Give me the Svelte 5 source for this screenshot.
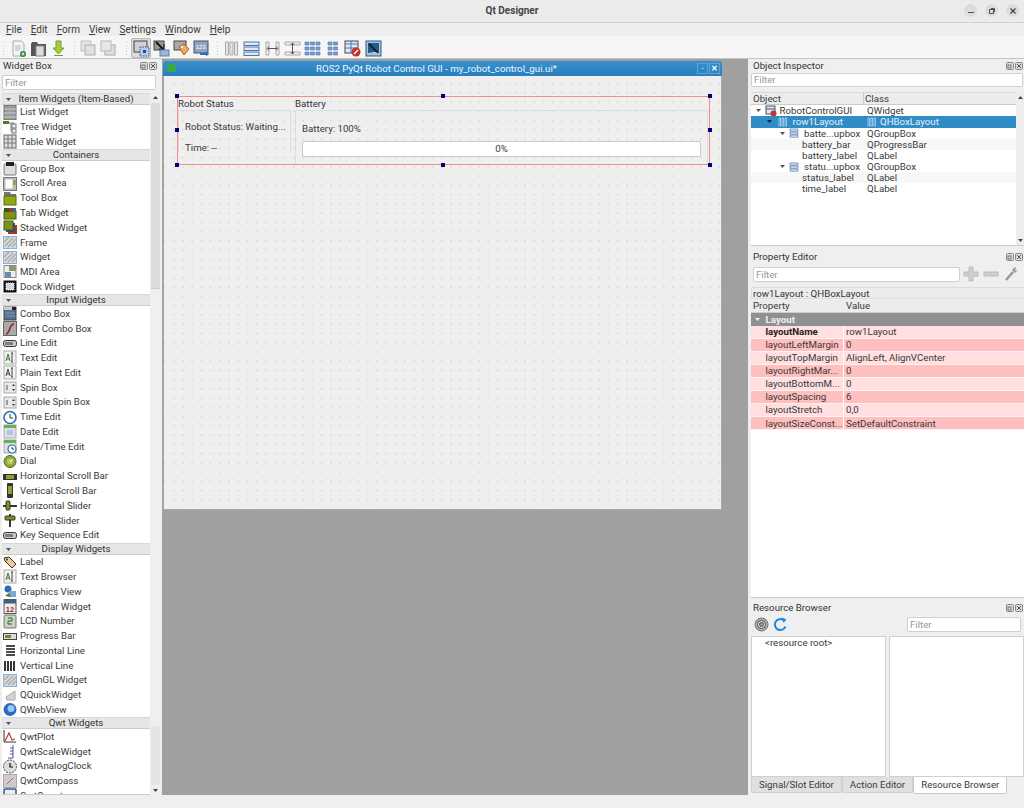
<script>
const ic = {
  list:`<rect x="1" y="0" width="12" height="15" fill="#9a9a9a" stroke="#666"/><path d="M1 4h12M1 8h12M1 12h12" stroke="#ccc"/>`,
  tree:`<rect x="0" y="2" width="6" height="3" fill="#4c7c2c"/><path d="M6 4h5v4h2M8 4v8h3" stroke="#777" fill="none"/><rect x="9" y="5" width="4" height="4" fill="#eee" stroke="#777"/><rect x="9" y="10" width="4" height="4" fill="#eee" stroke="#777"/>`,
  table:`<rect x="1" y="1" width="12" height="13" fill="#ddd" stroke="#666"/><path d="M1 5h12M1 9h12M5 1v13M9 1v13" stroke="#777"/>`,
  group:`<rect x="1" y="3" width="12" height="11" rx="1" fill="#ddd" stroke="#777"/><rect x="3" y="1" width="8" height="4" fill="#222"/>`,
  scroll:`<rect x="0.5" y="1.500" width="13" height="13" fill="#bbb" stroke="#777"/><rect x="2.500" y="3.500" width="7" height="9" fill="#fff"/><rect x="10.500" y="4" width="2" height="5" fill="#8a9a1a"/>`,
  tool:`<path d="M1 1h6l1 2h5v3H1z" fill="#777"/><rect x="1" y="5" width="12" height="9" fill="#8fa81c" stroke="#5a6a10"/>`,
  tab:`<rect x="1" y="6" width="12" height="8" fill="#7d9418" stroke="#4a5a10"/><rect x="1" y="3" width="5" height="4" fill="#2b5a22"/><rect x="6" y="3" width="4" height="4" fill="#b0302a"/><rect x="10" y="3" width="3" height="4" fill="#2b6aa0"/>`,
  stack:`<rect x="5" y="5" width="9" height="9" fill="#a5391e"/><rect x="3" y="3" width="9" height="9" fill="#2b4a90"/><rect x="1" y="1" width="9" height="9" fill="#7d9418" stroke="#4a5a10"/>`,
  frame:`<rect x="0.500" y="1.500" width="13" height="12" fill="#d8d8d8" stroke="#8ab0dc"/><path d="M2 11L10 3M5 12l8-8M1 7l5-5M9 12l4-4" stroke="#aaa" stroke-width="1.300"/>`,
  mdi:`<rect x="1" y="1.500" width="12" height="12" fill="#eee" stroke="#888"/><rect x="6" y="2" width="7" height="5" fill="#8a9a6a"/><rect x="2" y="8" width="6" height="5" fill="#6c8ab0"/>`,
  dock:`<rect x="0.500" y="1.500" width="13" height="12" fill="#111"/><rect x="3" y="4" width="8" height="7" fill="#cfd8e8" stroke="#fff" stroke-dasharray="1 1"/>`,
  combo:`<rect x="1" y="1" width="12" height="13" fill="#55708f" stroke="#444"/><rect x="1" y="1" width="12" height="3" fill="#ccc"/><path d="M9 1h4v3H9z" fill="#222"/><path d="M2 7h10M2 10h10" stroke="#8099b8"/>`,
  font:`<rect x="0.500" y="0.500" width="13" height="14" fill="#aaa" stroke="#666"/><path d="M3 13C7 13 6 3 11 3" stroke="#9a1c1c" stroke-width="1.500" fill="none"/>`,
  line:`<rect x="0.500" y="4.500" width="13" height="6" rx="2" fill="#ccc" stroke="#333"/><path d="M3 6v3M5 6v3M7 6v3M9 6v3" stroke="#333"/>`,
  text:`<rect x="1" y="1" width="12" height="13" fill="#f2f2f2" stroke="#aaa"/><path d="M3 11l2-7 2 7M3.700 9h3" stroke="#3c7a2c" fill="none"/><path d="M9 3v9M8 3h2M8 12h2" stroke="#444"/>`,
  plain:`<rect x="1" y="1" width="12" height="13" fill="#f2f2f2" stroke="#aaa"/><path d="M3 11l2-7 2 7M3.700 9h3" stroke="#444" fill="none"/><path d="M9 3v9M8 3h2M8 12h2" stroke="#444"/>`,
  spin:`<rect x="1" y="2" width="12" height="11" fill="#e8e8e8" stroke="#aaa"/><path d="M4 5v5" stroke="#555"/><path d="M9 6l1.500-2L12 6zM9 9l1.500 2L12 9z" fill="#333"/>`,
  time:`<circle cx="7" cy="7.500" r="6" fill="#fff" stroke="#2a6cb0" stroke-width="1.600"/><path d="M7 4v4h3" stroke="#333" fill="none"/>`,
  date:`<rect x="1" y="1" width="12" height="13" fill="#dde" stroke="#aaa"/><rect x="1" y="1" width="12" height="3" fill="#6ab04c"/><rect x="4" y="6" width="6" height="5" fill="#b8c4d8"/>`,
  datetime:`<rect x="1" y="1" width="12" height="13" fill="#dde" stroke="#aaa"/><rect x="1" y="1" width="12" height="3" fill="#6ab04c"/><circle cx="9" cy="10" r="4" fill="#fff" stroke="#2a6cb0" stroke-width="1.200"/><path d="M9 8v2h2" stroke="#333" fill="none"/>`,
  dial:`<circle cx="7" cy="7.500" r="6" fill="#8fa83c" stroke="#556a18"/><circle cx="7" cy="7.500" r="3" fill="#b6c868"/><path d="M7 8l3-3" stroke="#fff"/>`,
  hscroll:`<rect x="0" y="5" width="14" height="6" fill="#333"/><rect x="3" y="6" width="8" height="4" fill="#8fa02c"/>`,
  vscroll:`<rect x="4" y="0" width="6" height="15" rx="1" fill="#333"/><rect x="5" y="3" width="4" height="8" fill="#8fa02c"/>`,
  hslider:`<path d="M0 8h14" stroke="#333" stroke-width="2"/><rect x="3" y="3" width="4" height="9" rx="1" fill="#7d9418" stroke="#333"/>`,
  vslider:`<path d="M7 1v13" stroke="#333" stroke-width="2"/><rect x="2" y="3" width="10" height="4" rx="1" fill="#7d9418" stroke="#333"/>`,
  label:`<path d="M1 3l5-1 7 7-4 4-7-7z" fill="#f2c894" stroke="#333"/><circle cx="4" cy="4.500" r="1" fill="#333"/>`,
  gview:`<circle cx="5" cy="5" r="3.500" fill="#2a6cb0"/><rect x="6" y="7" width="7" height="6" fill="#7ea8d8"/><path d="M2 12l4-3 2 4z" fill="#4a7c2c"/>`,
  cal:`<rect x="1" y="0.500" width="12" height="14" fill="#eee" stroke="#555"/><rect x="1" y="0.500" width="12" height="4" fill="#45607f"/><text x="7" y="12.500" text-anchor="middle" font-size="7.500" font-weight="700" fill="#b02020" font-family="Liberation Sans">12</text>`,
  lcd:`<rect x="1" y="1" width="12" height="13" rx="1" fill="#c8d4c0" stroke="#777"/><path d="M5 4h4v3H5v3h4" stroke="#2a6a2a" fill="none"/>`,
  prog:`<rect x="0.500" y="5.500" width="13" height="6" fill="#ddd" stroke="#444"/><rect x="2" y="7" width="6" height="3" fill="#77882a"/>`,
  hline:`<path d="M3 3h9M3 6h9M3 9h9M3 12h9" stroke="#111" stroke-width="1.700"/>`,
  vline:`<path d="M2 3v10M5 3v10M8 3v10M11 3v10" stroke="#111" stroke-width="1.700"/>`,
  quick:`<path d="M3 10l9-6v9H4z" fill="#d4d4d4" stroke="#aaa"/>`,
  web:`<circle cx="7" cy="7.500" r="6.500" fill="#2a6cc0"/><circle cx="8" cy="6.500" r="3.500" fill="#9cc4ec"/>`,
  plot:`<path d="M1 1v12h12" stroke="#333" fill="none"/><path d="M2 12L6 4l3 7 3-1" stroke="#c0392b" fill="none" stroke-width="1.200"/>`,
  scale:`<path d="M10 1v13H5M7 4h3M7 7h3M7 10h3" stroke="#4a4ac0" fill="none"/>`,
  clock:`<circle cx="7" cy="7.500" r="6.500" fill="#ddd" stroke="#444" stroke-dasharray="2 1"/><path d="M7 4v4h3" stroke="#111" stroke-width="1.200" fill="none"/>`,
  compass:`<rect x="0.500" y="1.500" width="13" height="13" fill="#ccc" stroke="#aaa"/><path d="M4 11l6-6" stroke="#d05a5a"/>`,
  gauge:`<rect x="1" y="1" width="12" height="13" rx="1" fill="#eee" stroke="#335a8a" stroke-width="1.500"/>`
};

const sections = [
  ['Item Widgets (Item-Based)', [['List Widget','list'],['Tree Widget','tree'],['Table Widget','table']]],
  ['Containers', [['Group Box','group'],['Scroll Area','scroll'],['Tool Box','tool'],['Tab Widget','tab'],['Stacked Widget','stack'],['Frame','frame'],['Widget','frame'],['MDI Area','mdi'],['Dock Widget','dock']]],
  ['Input Widgets', [['Combo Box','combo'],['Font Combo Box','font'],['Line Edit','line'],['Text Edit','text'],['Plain Text Edit','plain'],['Spin Box','spin'],['Double Spin Box','spin'],['Time Edit','time'],['Date Edit','date'],['Date/Time Edit','datetime'],['Dial','dial'],['Horizontal Scroll Bar','hscroll'],['Vertical Scroll Bar','vscroll'],['Horizontal Slider','hslider'],['Vertical Slider','vslider'],['Key Sequence Edit','line']]],
  ['Display Widgets', [['Label','label'],['Text Browser','text'],['Graphics View','gview'],['Calendar Widget','cal'],['LCD Number','lcd'],['Progress Bar','prog'],['Horizontal Line','hline'],['Vertical Line','vline'],['OpenGL Widget','frame'],['QQuickWidget','quick'],['QWebView','web']]],
  ['Qwt Widgets', [['QwtPlot','plot'],['QwtScaleWidget','scale'],['QwtAnalogClock','clock'],['QwtCompass','compass'],['QwtCounter','gauge']]]
];

const tools = [
  [`<path d="M3 1h8l3 3v12H3z" fill="#f4f4f4" stroke="#aaa"/><path d="M5 6h6M5 8h6M5 10h5" stroke="#bbb"/><circle cx="13" cy="14" r="3" fill="#2a8a3a"/><path d="M11.500 14h3M13 12.500v3" stroke="#fff"/>`,
   `<path d="M1 4l1-2h5l1 2h8v12H1z" fill="#555"/><rect x="6" y="6" width="8" height="10" fill="#ddd" stroke="#888"/>`,
   `<path d="M6 1h5v7h3l-5.500 6L3 8h3z" fill="#a6cc44" stroke="#7a9a2c"/><path d="M4 15.500h9" stroke="#7a9a2c"/>`],
  [`<rect x="1" y="1" width="10" height="10" fill="#e4e4e4" stroke="#c2c2c2"/><rect x="5" y="5" width="10" height="10" fill="#e0e0e0" stroke="#b0b0b0"/>`,
   `<rect x="5" y="5" width="10" height="10" fill="#e0e0e0" stroke="#aaa"/><rect x="1" y="1" width="10" height="10" fill="#e8e8e8" stroke="#b8b8b8"/>`],
  [`<rect x="1" y="1" width="13" height="11" fill="#cfcfcf" stroke="#444"/><rect x="7" y="7" width="9" height="9" fill="#b7cbea" stroke="#2a5cb0" stroke-dasharray="1.500 1"/><rect x="10" y="10" width="3" height="3" fill="#2a4c90"/>`,
   `<rect x="1" y="1" width="10" height="9" fill="#999" stroke="#444"/><path d="M3 2l7 7" stroke="#111" stroke-width="1.800"/><path d="M6 9h5V4" stroke="#111" fill="none"/><rect x="7" y="10" width="9" height="6" fill="#9db8dc" stroke="#5a7cac"/>`,
   `<rect x="1" y="1" width="12" height="9" fill="#aaa" stroke="#444"/><path d="M6 7l5-3 5 5-5 6z" fill="#f0a860" stroke="#c05a20"/><circle cx="9" cy="7" r="1" fill="#fff"/>`,
   `<rect x="1" y="1" width="14" height="12" fill="#8ea4bf" stroke="#456"/><text x="2.500" y="9" font-size="6" font-family="Liberation Sans" fill="#fff">123</text><path d="M7 13h6v-2l3 3.500-3 1.500v-1H7z" fill="#2a6cc0"/>`],
  [`<path d="M2.500 2v13h3V2zM7 2v13h3V2zM11.500 2v13h3V2z" fill="#e6e6e6" stroke="#aaa"/>`,
   `<rect x="1" y="2" width="15" height="3.500" fill="#dfe8f3" stroke="#4d7aa8"/><rect x="1" y="7" width="15" height="3.500" fill="#dfe8f3" stroke="#4d7aa8"/><rect x="1" y="12" width="15" height="3.500" fill="#dfe8f3" stroke="#4d7aa8"/>`,
   `<path d="M2 2h3v13H2zM12 2h3v13h-3z" fill="#eee" stroke="#aaa"/><path d="M4 8.500h9M5 6.500l-2 2 2 2M12 6.500l2 2-2 2" stroke="#555" fill="none"/>`,
   `<path d="M1 2h15v3H1zM1 12h15v3H1z" fill="#eee" stroke="#aaa"/><path d="M8.500 3v11M6.500 5l2-2 2 2M6.500 12l2 2 2-2" stroke="#555" fill="none"/>`,
   `<path d="M1 2h4v3H1zM6.500 2h4v3h-4zM12 2h4v3h-4zM1 7h4v3H1zM6.500 7h4v3h-4zM12 7h4v3h-4zM1 12h4v3H1zM6.500 12h4v3h-4zM12 12h4v3h-4z" fill="#7d9fca" stroke="#4a75a8" stroke-width=".6"/>`,
   `<path d="M4 2h4v3H4zM9.500 2h4v3h-4zM4 7h4v3H4zM9.500 7h4v3h-4zM4 12h4v3H4zM9.500 12h4v3h-4z" fill="#7d9fca" stroke="#4a75a8" stroke-width=".6"/>`,
   `<rect x="1" y="1" width="13" height="12" fill="#dfe8f3" stroke="#445"/><path d="M1 4h13M1 8h13M7 1v12" stroke="#4d7aa8"/><circle cx="12" cy="12" r="4.500" fill="#c0362c"/><path d="M10 14l4-4" stroke="#fff" stroke-width="1.200"/>`,
   `<rect x="1" y="1" width="15" height="15" fill="#a8c4de" stroke="#2a5a8a"/><rect x="3" y="3" width="11" height="10" fill="#1e5a8a"/><path d="M4 4l9 9" stroke="#111" stroke-width="1.600"/><path d="M3 13l7-1 3 1z" fill="#cfe0f0"/>`]
];

const props = [
  ['layoutName','row1Layout'],['layoutLeftMargin','0'],['layoutTopMargin','AlignLeft, AlignVCenter'],['layoutRightMar...','0'],
  ['layoutBottomM...','0'],['layoutSpacing','6'],['layoutStretch','0,0'],['layoutSizeConst...','SetDefaultConstraint']
];

const tree = [
  ['RobotControlGUI','QWidget',0,'form'],['row1Layout','QHBoxLayout',1,'h'],['batte...upbox','QGroupBox',2,'g'],
  ['battery_bar','QProgressBar',3,''],['battery_label','QLabel',3,''],['statu...upbox','QGroupBox',2,'g'],
  ['status_label','QLabel',3,''],['time_label','QLabel',3,'']
];

const menus = [['F','ile'],['E','dit'],['F','orm',1],['V','iew'],['S','ettings'],['W','indow'],['H','elp']];
</script>

{#snippet dockBtns()}
  <span class="dbtns">
    <svg width="8" height="8" viewBox="0 0 8 8"><rect x=".5" y=".5" width="7" height="7" rx="1" fill="#ddd" stroke="#888"/><rect x="2" y="3" width="3" height="3" fill="none" stroke="#777"/></svg>
    <svg width="8" height="8" viewBox="0 0 8 8"><rect x=".5" y=".5" width="7" height="7" rx="1" fill="#ddd" stroke="#888"/><path d="M2 2l4 4M6 2L2 6" stroke="#555"/></svg>
  </span>
{/snippet}
{#snippet arrow(color)}
  <svg class="arrow" width="7" height="5" viewBox="0 0 7 5"><path d="M1 1h5L3.500 4z" fill={color}/></svg>
{/snippet}
{#snippet bars(color)}
  <svg class="ticon" width="9" height="10" viewBox="0 0 9 10"><path d="M1 1v8h1.500V1zM4 1v8h1.500V1zM7 1v8h1.500V1z" fill="none" stroke={color} stroke-width=".6"/></svg>
{/snippet}

<div class="app">
  <header class="titlebar">
    <span class="title">Qt Designer</span>
    <div class="wm">
      <span class="wmb"><svg width="8" height="8" viewBox="0 0 8 8"><path d="M1 5.500h6" stroke="#555"/></svg></span>
      <span class="wmb"><svg width="8" height="8" viewBox="0 0 8 8"><rect x="1.500" y="2.500" width="4" height="4" fill="none" stroke="#555"/><path d="M3 1.500h3.500V5" fill="none" stroke="#555"/></svg></span>
      <span class="wmb"><svg width="8" height="8" viewBox="0 0 8 8"><path d="M1.500 1.500l5 5M6.500 1.500l-5 5" stroke="#444" stroke-width="1.200"/></svg></span>
    </div>
  </header>

  <nav class="menubar">
    {#each menus as m}
      <span class="menu"><u>{m[0]}</u>{m[1]}</span>
    {/each}
  </nav>

  <div class="toolbar">
    {#each tools as group, gi}
      <span class="handle"></span>
      <div class="tgroup" class:wide={gi === 1}>
        {#each group as t, ti}
          <span class="tool" class:on={gi === 2 && ti === 0}>
            <svg width="17" height="17" viewBox="0 0 17 17">{@html t}</svg>
          </span>
        {/each}
      </div>
    {/each}
  </div>

  <main class="main">
    <aside class="left">
      <div class="dtitle"><span>Widget Box</span>{@render dockBtns()}</div>
      <div class="filter lfilter">Filter</div>
      <div class="wbox">
        <div class="wlist">
          {#each sections as s}
            <div class="shead">{@render arrow('#555')}<span>{s[0]}</span></div>
            {#each s[1] as w}
              <div class="witem">
                <svg width="15" height="15" viewBox="0 0 15 15">{@html ic[w[1]]}</svg>
                <span>{w[0]}</span>
              </div>
            {/each}
          {/each}
        </div>
        <div class="vbar">
          <span class="sbtn"><svg width="7" height="5" viewBox="0 0 7 5"><path d="M1 4h5L3.500 1z" fill="#444"/></svg></span>
          <span class="thumb1"></span>
          <span class="thumb2"></span>
          <span class="sbtn"><svg width="7" height="5" viewBox="0 0 7 5"><path d="M1 1h5L3.500 4z" fill="#444"/></svg></span>
        </div>
      </div>
    </aside>

    <section class="mdi">
      <div class="win">
        <div class="wintitle">
          <span class="winicon"></span>
          <span class="wintext">ROS2 PyQt Robot Control GUI - my_robot_control_gui.ui*</span>
          <span class="winbtn">-</span>
          <span class="winbtn x">✕</span>
        </div>
        <div class="form">
          <div class="selbox">
            <div class="gbox status">
              <div class="gtitle">Robot Status</div>
              <div class="gframe">
                <div class="lab">Robot Status: Waiting...</div>
                <div class="lab">Time: --</div>
              </div>
            </div>
            <div class="gbox battery">
              <div class="gtitle">Battery</div>
              <div class="gframe bframe">
                <div class="lab">Battery: 100%</div>
                <div class="pbar">0%</div>
              </div>
            </div>
            <i class="h tl"></i><i class="h tc"></i><i class="h tr"></i>
            <i class="h ml"></i><i class="h mr"></i>
            <i class="h bl"></i><i class="h bc"></i><i class="h br"></i>
          </div>
        </div>
      </div>
    </section>

    <aside class="right">
      <div class="rpanel oi">
        <div class="dtitle"><span>Object Inspector</span>{@render dockBtns()}</div>
        <div class="filter ofilter">Filter</div>
        <div class="otree">
          <div class="ocontent">
            <div class="hdr"><span class="c1">Object</span><span class="c2">Class</span></div>
            {#each tree as r, i}
              <div class="trow d{r[2]}" class:sel={i === 1} class:alt={i === 3 || i === 6}>
                <span class="c1">
                  {#if r[3]}{@render arrow(i === 1 ? '#123' : '#555')}{/if}
                  {#if r[3] === 'form'}
                    <svg class="ticon" width="12" height="12" viewBox="0 0 12 12"><rect x="1" y="1" width="9" height="8" fill="#dfe8f3" stroke="#456"/><path d="M1 4h9" stroke="#456"/><circle cx="8.500" cy="8.500" r="3" fill="#c0362c"/></svg>
                  {:else if r[3] === 'h'}
                    {@render bars('#e0eefa')}
                  {:else if r[3] === 'g'}
                    <svg class="ticon" width="10" height="10" viewBox="0 0 10 10"><path d="M1 1h8v2.200H1zM1 4h8v2.200H1zM1 7h8v2.200H1z" fill="#dfe8f3" stroke="#4d7aa8" stroke-width=".7"/></svg>
                  {/if}
                  <span>{r[0]}</span>
                </span>
                <span class="c2">
                  {#if i === 1}{@render bars('#e0eefa')}{/if}
                  <span>{r[1]}</span>
                </span>
              </div>
            {/each}
          </div>
          <div class="vbar2">
            <span class="sbtn"><svg width="7" height="5" viewBox="0 0 7 5"><path d="M1 4h5L3.500 1z" fill="#444"/></svg></span>
            <span class="track"></span>
            <span class="sbtn"><svg width="7" height="5" viewBox="0 0 7 5"><path d="M1 1h5L3.500 4z" fill="#444"/></svg></span>
          </div>
        </div>
      </div>

      <div class="rpanel pe">
        <div class="dtitle"><span>Property Editor</span>{@render dockBtns()}</div>
        <div class="petools">
          <div class="filter pfilter">Filter</div>
          <svg width="16" height="16" viewBox="0 0 16 16"><path d="M6 1h4v5h5v4h-5v5H6v-5H1V6h5z" fill="#cfcfcf" stroke="#bbb"/></svg>
          <svg width="16" height="16" viewBox="0 0 16 16"><rect x="1" y="6" width="14" height="4" fill="#cfcfcf" stroke="#bbb"/></svg>
          <svg width="16" height="16" viewBox="0 0 16 16"><path d="M3 14L10 6" stroke="#999" stroke-width="2.500"/><path d="M9 4l3-3 1 1-1 3 3-1-3 3z" fill="#999"/></svg>
        </div>
        <div class="pclass">row1Layout : QHBoxLayout</div>
        <div class="ptable">
          <div class="phdr"><span class="pc1">Property</span><span class="pc2">Value</span></div>
          <div class="pgroup">{@render arrow('#eee')}<span>Layout</span></div>
          {#each props as p, i}
            <div class="prow" class:dark={i % 2 === 1}>
              <span class="pc1" class:bold={i === 0}>{p[0]}</span>
              <span class="pc2">{p[1]}</span>
            </div>
          {/each}
        </div>
      </div>

      <div class="rpanel rb">
        <div class="dtitle"><span>Resource Browser</span>{@render dockBtns()}</div>
        <div class="rbtools">
          <svg width="15" height="15" viewBox="0 0 15 15"><circle cx="7.500" cy="7.500" r="6.500" fill="#aaa" stroke="#777"/><circle cx="7.500" cy="7.500" r="4" fill="#ddd" stroke="#555"/><circle cx="7.500" cy="7.500" r="2" fill="#999" stroke="#555"/></svg>
          <svg width="15" height="15" viewBox="0 0 15 15"><path d="M12.500 9.500A5.500 5.500 0 1 1 10.500 3" fill="none" stroke="#1e88e0" stroke-width="2"/><path d="M9 0.500l4.500 2-3 3.500z" fill="#1e88e0"/></svg>
          <div class="filter rfilter">Filter</div>
        </div>
        <div class="rpanes">
          <div class="rpane rp1">&lt;resource root&gt;</div>
          <div class="rpane rp2"></div>
        </div>
        <div class="tabs">
          <span class="tab">Signal/Slot Editor</span>
          <span class="tab">Action Editor</span>
          <span class="tab active">Resource Browser</span>
        </div>
      </div>
    </aside>
  </main>
  <footer class="status"></footer>
</div>

<style>
  :global(body) { margin: 0; background: #efefef; }
  .app {
    width: 1024px; height: 808px; display: flex; flex-direction: column; overflow: hidden;
    font: 9.7px/1 Roboto, "Noto Sans", sans-serif; color: #3a3a3a; background: #efefef;
  }
  .titlebar { height: 22px; flex: none; display: flex; align-items: center; justify-content: center; position: relative; background: #ebebeb; border-bottom: 1px solid #d0d0d0; }
  .title { font-weight: 700; font-size: 10px; color: #444; }
  .wm { position: absolute; right: 5px; top: 4px; display: flex; gap: 8px; }
  .wmb { width: 13px; height: 13px; border-radius: 50%; background: #dcdcdc; display: flex; align-items: center; justify-content: center; }
  .menubar { height: 13px; flex: none; display: flex; align-items: center; gap: 9px; padding-left: 6px; background: #eee; font-size: 10px; }
  .menu u { text-underline-offset: 1px; }
  .toolbar { height: 23px; flex: none; display: flex; align-items: center; padding: 2px 0 0 2px; box-sizing: border-box; background: #f6f6f6; border-bottom: 1px solid #c4c4c4; }
  .handle { width: 3px; height: 14px; margin-right: 3px; background: radial-gradient(circle, #cfcfcf 0.7px, transparent 0.8px) 0 0 / 3px 3px; }
  .tgroup { display: flex; margin-right: 4px; }
  .tgroup.wide { margin-right: 6px; }
  .tool { width: 20.2px; height: 20px; display: flex; align-items: center; justify-content: center; border-radius: 2px; }
  .tool.on { background: #dcdcdc; border: 1px solid #b8b8b8; box-sizing: border-box; }

  .main { flex: 1; min-height: 0; display: flex; }
  .left { width: 160px; flex: none; display: flex; flex-direction: column; padding-left: 2px; box-sizing: border-box; }
  .dtitle { display: flex; flex: none; justify-content: space-between; align-items: center; height: 13px; color: #333; }
  .left .dtitle { padding: 0 3px 0 1px; }
  .dbtns { display: flex; gap: 1px; }
  .filter { background: #fff; border: 1px solid #d0d0d0; border-radius: 2px; color: #999; box-sizing: border-box; height: 15px; line-height: 13px; padding-left: 2px; flex: none; }
  .lfilter { width: 154px; margin-top: 3px; }
  .wbox { flex: 1; min-height: 0; display: flex; margin-top: 2.5px; }
  .wlist { width: 148px; background: #fff; overflow: hidden; border-bottom: 1px solid #ccc; }
  .shead { height: 12.2px; background: #e6e6e6; border-top: 1px solid #d8d8d8; border-bottom: 1px solid #ccc; box-sizing: border-box; display: flex; align-items: center; justify-content: center; position: relative; color: #333; }
  .shead .arrow { position: absolute; left: 3px; top: 3px; }
  .witem { height: 14.78px; display: flex; align-items: center; gap: 2px; padding-left: 1px; color: #3a3a3a; }
  .witem svg { flex: none; }
  .vbar { width: 9px; margin-left: 1px; display: flex; flex-direction: column; background: #efefef; }
  .sbtn { height: 10px; flex: none; display: flex; align-items: center; justify-content: center; }
  .thumb1 { height: 185px; background: #dcdcdc; border-bottom: 1px solid #ccc; }
  .thumb2 { flex: 1; }
  .vbar .thumb2 { background: linear-gradient(#efefef 0 437px, #e4e4e4 437px); }

  .mdi { width: 586px; flex: none; margin-left: 2px; background: #a0a0a0; position: relative; }
  .win { position: absolute; left: 1px; top: 2px; width: 559px; height: 449px; background: #efefef; border: 1px solid #aaa; border-top: 0; border-radius: 3px 3px 0 0; box-sizing: border-box; display: flex; flex-direction: column; }
  .wintitle { height: 15px; flex: none; margin: 0 -1px; background: linear-gradient(#3590cf, #2a7fbd); border-radius: 3px 3px 0 0; display: flex; align-items: center; color: #eef6fc; position: relative; justify-content: flex-end; padding-right: 2px; gap: 1px; }
  .winicon { position: absolute; left: 4px; top: 3px; width: 9px; height: 8px; background: #3aa84a; border-radius: 1px; }
  .wintext { position: absolute; left: 0; right: 0; text-align: center; padding-right: 12px; }
  .winbtn { width: 11px; height: 11px; border: 1px solid #5ba4d6; box-sizing: border-box; display: flex; align-items: center; justify-content: center; color: #fff; font-size: 8px; position: relative; }
  .winbtn.x { font-weight: 700; }
  .form { flex: 1; padding: 20px 0 0 13px; background: #efefef radial-gradient(circle, #b4b4b4 .55px, transparent .7px) 5px 3px / 9.25px 9.25px; }
  .selbox { position: relative; width: 533px; height: 69px; box-sizing: border-box; border: 1px solid #f08c8c; display: flex; gap: 4px; }
  .gbox { display: flex; flex-direction: column; }
  .status { width: 113px; }
  .battery { width: 413px; }
  .gtitle { height: 13px; line-height: 13px; flex: none; color: #333; }
  .gframe { flex: 1; border: 1px solid #dcdcdc; border-bottom: 0; display: flex; flex-direction: column; padding: 11px 0 0 6px; gap: 12px; }
  .bframe { padding-top: 12.5px; gap: 8.5px; }
  .lab { height: 9px; line-height: 9px; white-space: nowrap; }
  .pbar { width: 399px; height: 16px; line-height: 14px; background: #fff; border: 1px solid #c8c8c8; border-radius: 2px; text-align: center; box-sizing: border-box; }
  .h { position: absolute; width: 4px; height: 4px; background: #00007f; }
  .tl { left: -3px; top: -3px; } .tc { left: 263px; top: -3px; } .tr { right: -3px; top: -3px; }
  .ml { left: -3px; top: 31px; } .mr { right: -3px; top: 31px; }
  .bl { left: -3px; bottom: -3px; } .bc { left: 263px; bottom: -3px; } .br { right: -3px; bottom: -3px; }

  .right { width: 276px; flex: none; display: flex; flex-direction: column; box-sizing: border-box; }
  .rpanel { display: flex; flex-direction: column; flex: none; }
  .right .dtitle { padding: 0 1px 0 5px; }
  .oi { height: 187px; }
  .ofilter { width: 272px; height: 14px; margin: 1px 0 0 3px; line-height: 12px; }
  .otree { margin: 5px 0 0 3px; height: 154px; display: flex; background: #fff; border-bottom: 1px solid #ccc; box-sizing: border-box; width: 273px; }
  .ocontent { width: 265px; flex: none; }
  .hdr { height: 13px; background: #ececec; border-top: 1px solid #d8d8d8; border-bottom: 1px solid #ccc; box-sizing: border-box; display: flex; align-items: center; }
  .hdr .c1 { width: 113px; padding-left: 2px; box-sizing: border-box; border-right: 1px solid #ccc; height: 100%; display: flex; align-items: center; }
  .hdr .c2 { padding-left: 1px; }
  .trow { height: 11.1px; display: flex; align-items: center; white-space: nowrap; }
  .trow .c1 { width: 114px; flex: none; display: flex; align-items: center; box-sizing: border-box; height: 100%; }
  .trow .c2 { display: flex; align-items: center; padding-left: 2px; gap: 1px; }
  .ticon { flex: none; margin-right: 3px; }
  .arrow { flex: none; }
  .d0 .c1 { padding-left: 3.5px; } .d0 .arrow { margin-right: 3px; }
  .d1 .c1 { padding-left: 15px; } .d1 .arrow { margin-right: 5px; } .d1 .c1 .ticon { margin-right: 5.5px; }
  .d2 .c1 { padding-left: 27.5px; } .d2 .arrow { margin-right: 3.5px; } .d2 .ticon { margin-right: 5px; }
  .d3 .c1 { padding-left: 51px; }
  .trow.alt { background: #f7f7f7; }
  .trow.sel { background: #308cc6; color: #e4f0f9; height: 11.8px; }
  .vbar2 { width: 8px; background: #ededed; display: flex; flex-direction: column; }
  .track { flex: 1; }

  .pe { margin-top: 4px; height: 348px; }
  .petools { display: flex; align-items: center; gap: 4px; margin-top: 3px; padding-left: 5px; height: 16px; }
  .pfilter { width: 207px; margin-right: -1px; }
  .pclass { margin: 5px 0 0 3px; height: 12px; line-height: 12px; padding-left: 1px; background: #ececec; border: 1px solid #dcdcdc; border-right: 0; box-sizing: border-box; color: #333; }
  .ptable { flex: 1; background: #fff; border-bottom: 1px solid #ccc; margin: 1px 0 0 3px; }
  .phdr { height: 13px; display: flex; align-items: center; background: #ececec; border-bottom: 1px solid #ccc; box-sizing: border-box; }
  .phdr .pc1 { padding-left: 2px; width: 93px; box-sizing: border-box; }
  .phdr .pc2 { padding-left: 2px; }
  .pgroup { height: 13px; background: #909090; color: #f0f0f0; font-weight: 700; display: flex; align-items: center; padding-left: 3px; gap: 4.6px; }
  .prow { height: 13.05px; display: flex; align-items: center; background: #ffdfdf; border-bottom: 1px solid #fff2f2; box-sizing: border-box; }
  .prow.dark { background: #ffbfbf; }
  .prow .pc1 { width: 93px; padding-left: 14.5px; box-sizing: border-box; white-space: nowrap; border-right: 1px solid #fff; height: 100%; display: flex; align-items: center; flex: none; }
  .prow .pc2 { padding-left: 2px; }
  .bold { font-weight: 700; color: #222; }

  .rb { flex: 1; min-height: 0; margin-top: 3px; }
  .rbtools { display: flex; align-items: center; gap: 4px; padding-left: 6px; margin-top: 2px; height: 17px; flex: none; }
  .rfilter { width: 114px; margin-left: auto; margin-right: 3px; }
  .rpanes { flex: 1; display: flex; gap: 3px; min-height: 0; margin: 3px 0 0 3px; }
  .rpane { background: #fff; border: 1px solid #d0d0d0; box-sizing: border-box; }
  .rp1 { width: 135px; padding: 1px 0 0 13px; }
  .rp2 { flex: 1; }
  .tabs { height: 18px; flex: none; display: flex; padding-left: 3px; }
  .tab { height: 16px; background: #e0e0e0; border: 1px solid #d0d0d0; border-top: 0; padding: 0 7px; line-height: 15px; border-radius: 0 0 2px 2px; box-sizing: border-box; }
  .tab.active { background: #fff; height: 17px; line-height: 16px; border-color: #c8c8c8; }
  .status { height: 13px; flex: none; background: #efefef; }
</style>
